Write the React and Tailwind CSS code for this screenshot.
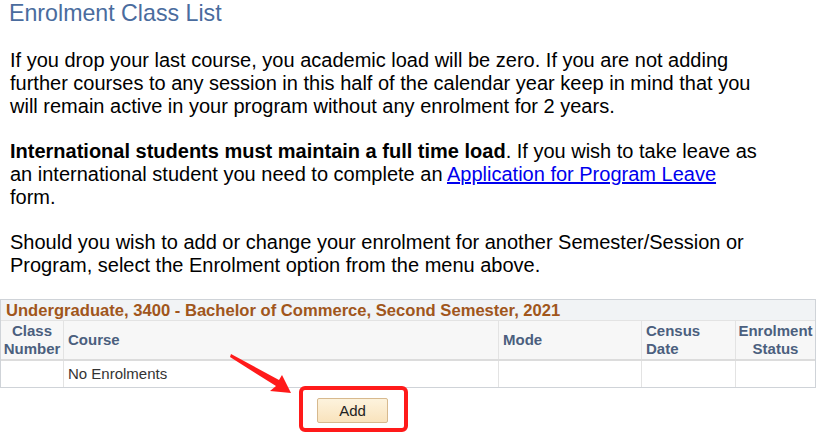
export default function App() {
  const font = { fontFamily: '"Liberation Sans", Arial, sans-serif' };
  return (
    <div className="relative w-[817px] h-[432px] bg-white overflow-hidden" style={font}>
      <div className="pl-[9px] text-[23.2px] leading-[27px] text-[#4a6c9e]">Enrolment Class List</div>
      <div className="pl-[10px] pt-[22px] w-[810px] text-[20px] leading-[22.75px] text-black">
        <p>
          If you drop your last course, you academic load will be zero. If you are not adding<br />
          further courses to any session in this half of the calendar year keep in mind that you<br />
          will remain active in your program without any enrolment for 2 years.
        </p>
        <p className="mt-[22.75px]">
          <b>International students must maintain a full time load</b>. If you wish to take leave as<br />
          an international student you need to complete an{" "}
          <a className="text-[#0000ee] underline" href="#">Application for Program Leave</a><br />
          form.
        </p>
        <p className="mt-[22.75px]">
          Should you wish to add or change your enrolment for another Semester/Session or<br />
          Program, select the Enrolment option from the menu above.
        </p>
      </div>
      <div className="mt-[22px] w-[816px] border border-[#cfd3d8] text-[15px]">
        <div className="h-[21px] bg-[#f1f3f5] pl-[5px] font-bold text-[16.6px] text-[#a0561c] leading-[21px] border-b border-[#e3e3e3]">
          Undergraduate, 3400 - Bachelor of Commerce, Second Semester, 2021
        </div>
        <div className="flex h-[40px] bg-[#f7f7f7] border-b-2 border-[#dcdcdc] font-bold text-[#4b5f7e] leading-[17.5px]">
          <div className="w-[63px] flex items-center justify-center text-center border-r border-[#e3e3e3]">Class<br />Number</div>
          <div className="w-[435px] flex items-center pl-[4px] border-r border-[#e3e3e3]">Course</div>
          <div className="w-[143px] flex items-center pl-[4px] border-r border-[#e3e3e3]">Mode</div>
          <div className="w-[94px] flex items-center pl-[4px] border-r border-[#e3e3e3]">Census<br />Date</div>
          <div className="flex-1 flex items-center justify-center text-center">Enrolment<br />Status</div>
        </div>
        <div className="flex h-[26px] text-[#333] leading-[26px]">
          <div className="w-[63px] border-r border-[#e3e3e3]"></div>
          <div className="w-[435px] pl-[4px] border-r border-[#e3e3e3]">No Enrolments</div>
          <div className="w-[143px] border-r border-[#e3e3e3]"></div>
          <div className="w-[94px] border-r border-[#e3e3e3]"></div>
          <div className="flex-1"></div>
        </div>
      </div>
      <div className="flex pl-[317px] pt-[10px]">
        <button className="w-[71px] h-[25px] rounded-[2px] border border-[#d7b98e] bg-gradient-to-b from-[#fdf3dd] to-[#f9e3bd] text-[15px] leading-[23px] text-[#222]">Add</button>
      </div>
      <div className="absolute left-[299px] top-[386px] w-[109px] h-[46px] border-[4px] border-[#ff1a1a] rounded-[6px]"></div>
      <svg className="absolute left-0 top-0" width="817" height="432">
        <polygon points="231,354 279,380 282,375 291,393 270,391 276,386 230,357" fill="#ff1a1a" />
      </svg>
    </div>
  );
}
